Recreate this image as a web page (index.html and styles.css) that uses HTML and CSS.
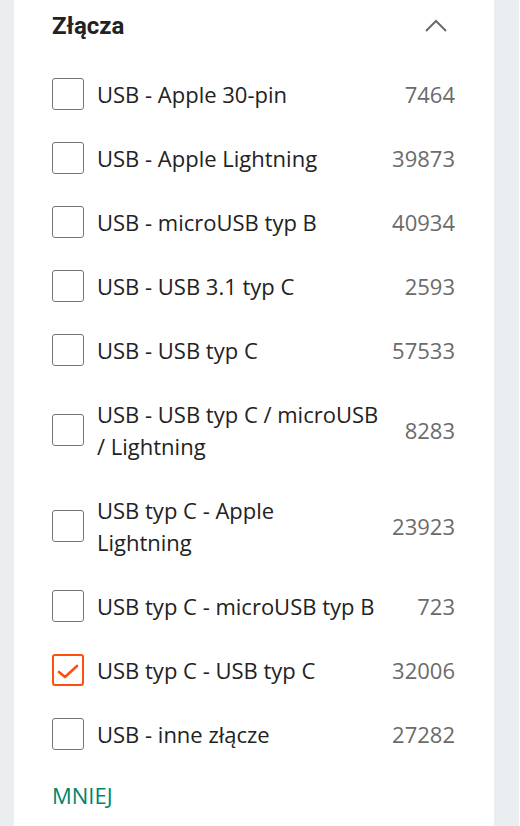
FILE: index.html
```html
<!DOCTYPE html>
<html lang="pl">
<head>
<meta charset="utf-8">
<title>Złącza</title>
<link rel="stylesheet" href="styles.css">
</head>
<body>
<div class="page">
  <section class="panel">
    <header class="panel-head">
      <h2 class="title">Złącza</h2>
      <svg class="chevron" width="30" height="14" viewBox="0 0 30 14" aria-hidden="true">
        <polyline points="1,12 11,2 21,12" fill="none" stroke="#6b6b6b" stroke-width="2"/>
      </svg>
    </header>
    <ul class="list">
      <li class="row"><span class="box"></span><span class="label">USB - Apple 30-pin</span><span class="count">7464</span></li>
      <li class="row"><span class="box"></span><span class="label">USB - Apple Lightning</span><span class="count">39873</span></li>
      <li class="row"><span class="box"></span><span class="label">USB - microUSB typ B</span><span class="count">40934</span></li>
      <li class="row"><span class="box"></span><span class="label">USB - USB 3.1 typ C</span><span class="count">2593</span></li>
      <li class="row"><span class="box"></span><span class="label">USB - USB typ C</span><span class="count">57533</span></li>
      <li class="row"><span class="box"></span><span class="label">USB - USB typ C / microUSB / Lightning</span><span class="count">8283</span></li>
      <li class="row"><span class="box"></span><span class="label">USB typ C - Apple Lightning</span><span class="count">23923</span></li>
      <li class="row"><span class="box"></span><span class="label">USB typ C - microUSB typ B</span><span class="count">723</span></li>
      <li class="row"><span class="box checked"><svg width="28" height="28" viewBox="0 0 28 28" aria-hidden="true"><polyline points="5,16 11,21 23,10" fill="none" stroke="#ff4f0f" stroke-width="2.6" stroke-linecap="round" stroke-linejoin="round"/></svg></span><span class="label">USB typ C - USB typ C</span><span class="count">32006</span></li>
      <li class="row"><span class="box"></span><span class="label">USB - inne złącze</span><span class="count">27282</span></li>
    </ul>
    <a class="less" href="#">MNIEJ</a>
  </section>
  <div class="edge"></div>
  <div class="edge-white"></div>
</div>
</body>
</html>
```

FILE: styles.css
```css
html, body {
  margin: 0;
  padding: 0;
}
body {
  background: #eaeef1;
  font-family: "Open Sans", "Liberation Sans", sans-serif;
  color: #222222;
}
.page {
  display: flex;
  padding-left: 14px;
  min-height: 826px;
}
.panel {
  width: 480px;
  background: #ffffff;
  padding: 0 39px 0 38px;
  box-sizing: border-box;
  height: 826px;
}
.edge {
  width: 25px;
  background: #eaeef1;
}
.edge-white {
  width: 1px;
  background: #ffffff;
}
.panel-head {
  display: flex;
  align-items: center;
  justify-content: space-between;
  height: 52px;
  margin-bottom: 10px;
}
.title {
  margin: 0;
  font-family: Roboto, "Liberation Sans", sans-serif;
  font-weight: 700;
  font-size: 24px;
  color: #222222;
  line-height: 1;
}
.chevron {
  display: block;
}
.list {
  list-style: none;
  margin: 0;
  padding: 0;
}
.row {
  display: flex;
  align-items: center;
  padding: 16px 0;
}
.box {
  flex: none;
  width: 32px;
  height: 32px;
  box-sizing: border-box;
  border: 1px solid #747474;
  border-radius: 3px;
  margin-right: 13px;
  display: flex;
  align-items: center;
  justify-content: center;
}
.box.checked {
  border: 2px solid #ff4f0f;
}
.box svg {
  display: block;
}
.label {
  flex: 1;
  font-size: 22px;
  line-height: 32px;
  color: #222222;
}
.count {
  flex: none;
  margin-left: 24px;
  font-size: 22px;
  line-height: 32px;
  color: #6b6b6b;
}
.less {
  display: inline-block;
  margin-top: 13px;
  font-size: 22px;
  line-height: 32px;
  color: #00846c;
  text-decoration: none;
}
```
